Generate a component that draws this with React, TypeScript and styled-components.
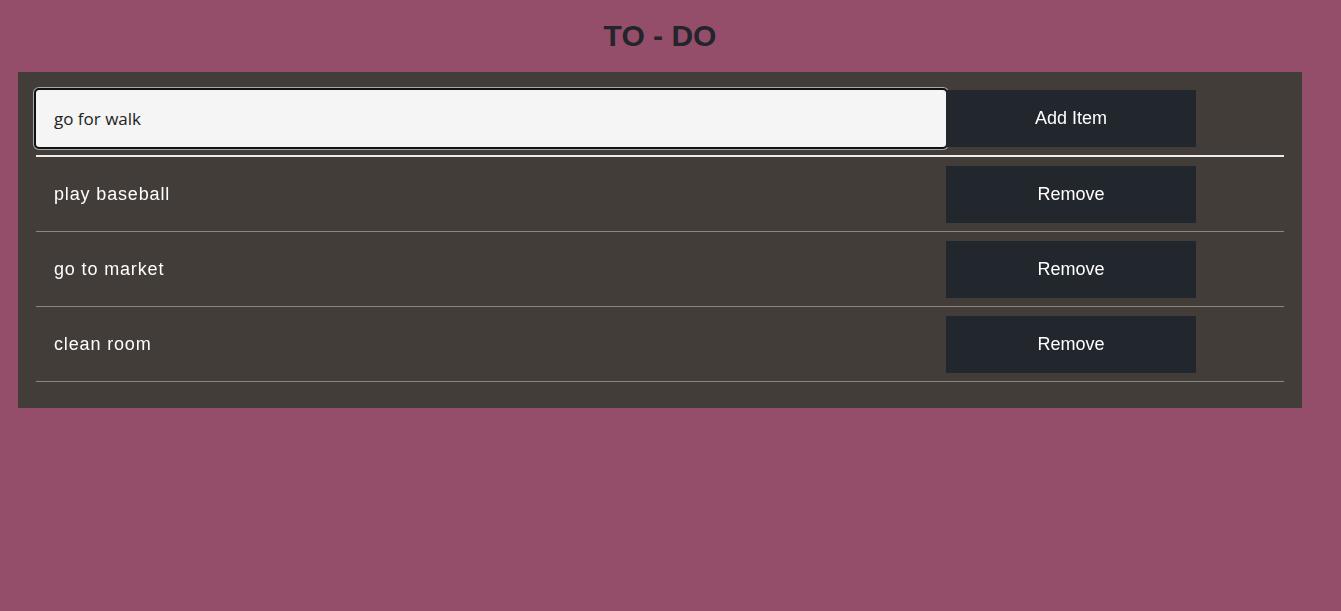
import styled, { createGlobalStyle } from 'styled-components';

const GlobalStyle = createGlobalStyle`
  html, body {
    margin: 0;
    padding: 0;
    background-color: #954e6a;
    font-family: "Liberation Sans", Arial, sans-serif;
  }
`;

const Page = styled.div`
  min-height: 611px;
  padding: 0 39px 0 18px;
  background-color: #954e6a;
`;

const Title = styled.h1`
  margin: 0;
  padding: 18px 0;
  text-align: center;
  font-size: 30px;
  line-height: 36px;
  font-weight: 700;
  color: #23252d;
`;

const Card = styled.div`
  background-color: #433d3a;
  padding: 18px 18px 26px;
`;

const InputRow = styled.form`
  display: flex;
  align-items: stretch;
  margin: 0;
  padding-bottom: 8px;
  border-bottom: 2px solid #ececec;
`;

const TextInput = styled.input`
  box-sizing: border-box;
  width: 910px;
  height: 57px;
  padding: 0 18px;
  border: none;
  border-radius: 3px;
  outline: 2px solid #111;
  box-shadow: 0 0 0 3px rgba(255, 255, 255, 0.55);
  background-color: #f5f5f5;
  font-family: "Open Sans", sans-serif;
  font-size: 17px;
  color: #222;
`;

const Button = styled.button`
  width: 250px;
  height: 57px;
  border: none;
  background-color: #22262d;
  color: #fff;
  font-family: "Liberation Sans", Arial, sans-serif;
  font-size: 18px;
  cursor: pointer;
`;

const List = styled.ul`
  list-style: none;
  margin: 0;
  padding: 0;
`;

const Item = styled.li`
  display: flex;
  align-items: center;
  padding: 9px 0 8px;
  border-bottom: 1px solid #8c8682;
`;

const ItemText = styled.span`
  box-sizing: border-box;
  width: 910px;
  padding-left: 18px;
  color: #fff;
  font-size: 18px;
  letter-spacing: 0.85px;
`;

const todos = ['play baseball', 'go to market', 'clean room'];

export default function App() {
  return (
    <>
      <GlobalStyle />
      <Page>
        <Title>TO - DO</Title>
        <Card>
          <InputRow onSubmit={(e) => e.preventDefault()}>
            <TextInput defaultValue="go for walk" autoFocus />
            <Button type="submit">Add Item</Button>
          </InputRow>
          <List>
            {todos.map((todo) => (
              <Item key={todo}>
                <ItemText>{todo}</ItemText>
                <Button type="button">Remove</Button>
              </Item>
            ))}
          </List>
        </Card>
      </Page>
    </>
  );
}
